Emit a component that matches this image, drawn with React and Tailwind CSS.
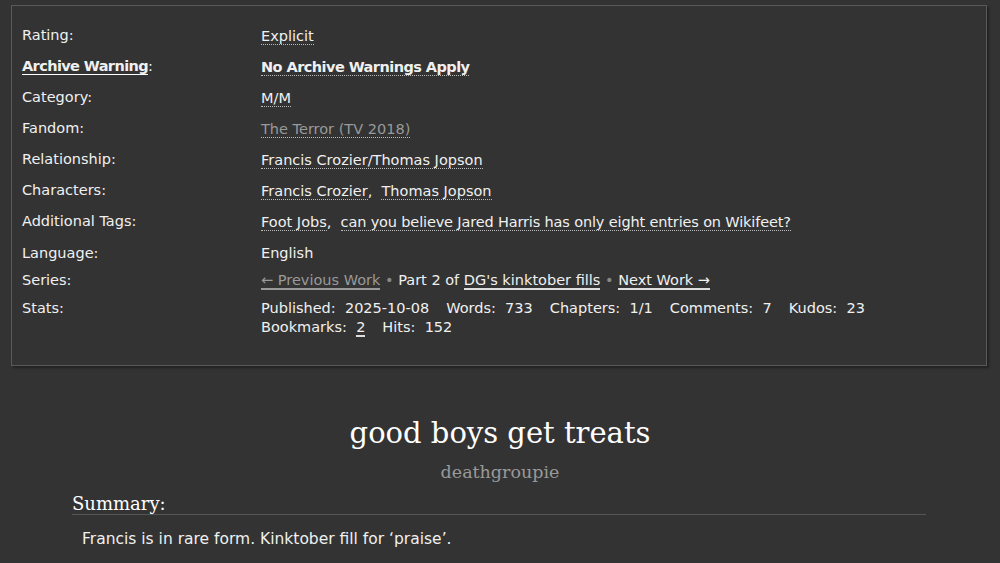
export default function App() {
  const sans = { fontFamily: '"DejaVu Sans", "Noto Sans", sans-serif' };
  const serif = { fontFamily: '"DejaVu Serif", "Liberation Serif", serif' };
  const dot = "border-b border-dotted border-[#bbb]";
  const rows = [
    ["Rating:", <span className={dot}>Explicit</span>],
    [
      <span className="font-bold tracking-[-0.6px] border-b border-solid border-white">Archive Warning</span>,
      <span className={"font-bold tracking-[-0.55px] " + dot}>No Archive Warnings Apply</span>,
    ],
    ["Category:", <span className={dot}>M/M</span>],
    ["Fandom:", <span className={"text-[#999] " + dot}>The Terror (TV 2018)</span>],
    ["Relationship:", <span className={dot}>Francis Crozier/Thomas Jopson</span>],
    [
      "Characters:",
      <span>
        <span className={dot}>Francis Crozier</span>,&nbsp;&nbsp;
        <span className={dot}>Thomas Jopson</span>
      </span>,
    ],
    [
      "Additional Tags:",
      <span>
        <span className={dot}>Foot Jobs</span>,&nbsp;&nbsp;
        <span className={"tracking-[-0.15px] " + dot}>can you believe Jared Harris has only eight entries on Wikifeet?</span>
      </span>,
    ],
  ];
  return (
    <div className="w-[1000px] h-[563px] overflow-hidden bg-[#333] text-[#f0f0f0]" style={sans}>
      <div className="pt-[5px] pl-[11px]">
        <div className="w-[976px] border border-[#5a5a5a] shadow-[2px_2px_2px_#222] pl-[10px] pt-[20px] pb-[28px] text-[14.5px]">
          <div className="grid grid-cols-[239px_1fr]">
            {rows.map(([l, v], i) => (
              <div key={i} className="contents">
                <div className="h-[31px] leading-[18px]">
                  {typeof l === "string" ? l : <>{l}:</>}
                </div>
                <div className="h-[31px] leading-[18px] pt-[1px]">{v}</div>
              </div>
            ))}
            <div className="h-[28px] leading-[18px] pt-[1px]">Language:</div>
            <div className="h-[28px] leading-[18px] pt-[1px]">English</div>
            <div className="h-[28px] leading-[18px]">Series:</div>
            <div className="h-[28px] leading-[18px]">
              <span className="text-[#999] border-b-2 border-[#999]">← Previous Work</span>
              <span className="text-[#888]"> • </span>
              Part 2 of{" "}
              <span className="border-b-2 border-[#ddd]">DG's kinktober fills</span>
              <span className="text-[#888]"> • </span>
              <span className="border-b-2 border-[#ddd]">Next Work →</span>
            </div>
            <div className="leading-[19px]">Stats:</div>
            <div className="leading-[19px]">
              <div className="flex gap-x-[17px] flex-wrap w-[620px]">
                <span>Published:&nbsp; 2025-10-08</span>
                <span>Words:&nbsp; 733</span>
                <span>Chapters:&nbsp; 1/1</span>
                <span>Comments:&nbsp; 7</span>
                <span>Kudos:&nbsp; 23</span>
                <span>
                  Bookmarks:&nbsp; <span className="border-b-2 border-[#ddd]">2</span>
                </span>
                <span>Hits:&nbsp; 152</span>
              </div>
            </div>
          </div>
        </div>
      </div>
      <div className="pt-[47px] text-center">
        <h2 className="text-[29px] leading-[40px] text-white" style={serif}>good boys get treats</h2>
        <div className="text-[17.5px] leading-[24px] mt-[7px] text-[#999]" style={serif}>deathgroupie</div>
      </div>
      <div className="mx-[72px] mt-[10px] w-[854px]">
        <div className="text-[18px] leading-[20px] border-b border-[#555] text-white" style={serif}>Summary:</div>
        <p className="pl-[10px] mt-[13px] text-[15.5px]">Francis is in rare form. Kinktober fill for ‘praise’.</p>
      </div>
    </div>
  );
}
